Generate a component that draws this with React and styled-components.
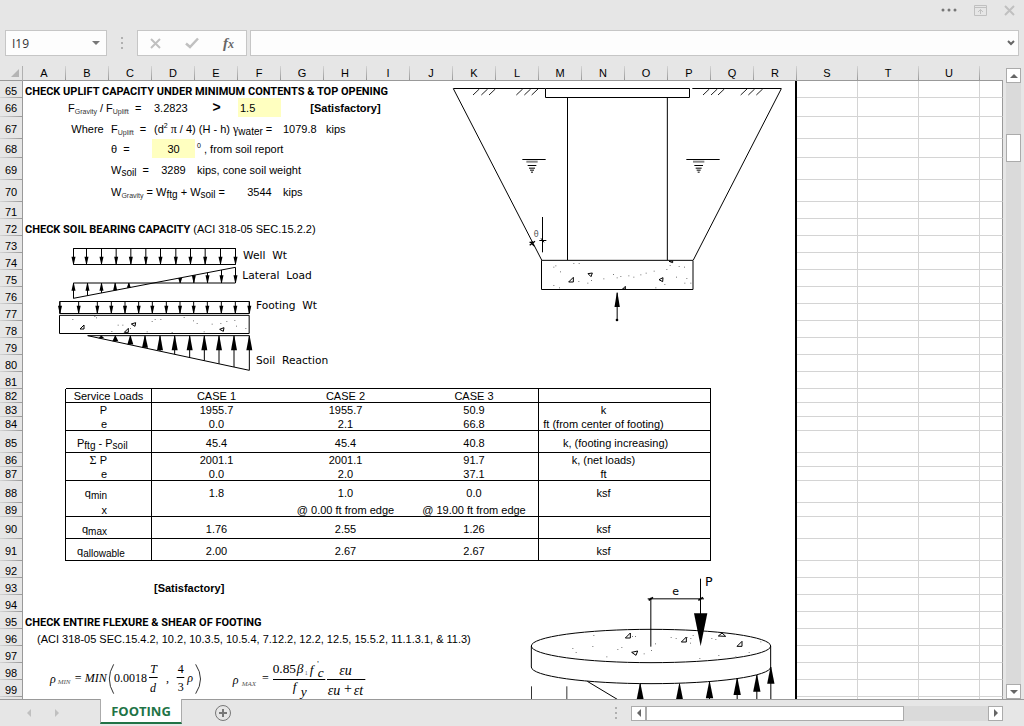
import { Fragment } from "react";
import styled, { createGlobalStyle } from "styled-components";

//#region Sheet data
const COLUMNS = "ABCDEFGHIJKLMNOPQRSTUV".split("");
const col = (letter) => COLUMNS.indexOf(letter);

function FUplift() {
  return (
    <>
      F<SmallSub>Uplift</SmallSub>
    </>
  );
}

// One band of the service loads table, columns B to P
function loads(n, h, label, cases, unit, line, unitIndent) {
  return {
    n,
    h,
    cells: [
      { at: "A", edge: true },
      { at: "B", ...label, line, edge: label.span === 2 },
      ...(label.span === 2 ? [] : [{ at: "C", line, edge: true }]),
      { at: "D", span: 3, text: cases[0], align: "center", line },
      { at: "G", span: 3, text: cases[1], align: "center", line },
      { at: "J", span: 3, text: cases[2], align: "center", line, edge: true },
      { at: "M", span: 3, text: unit, align: "center", indent: unitIndent, line },
      { at: "P", line, edge: true },
    ],
  };
}

const right = (text) => ({ text, align: "right" });

function getRows() {
  return [
    {
      n: 65,
      h: 17,
      cells: [
        {
          at: "A",
          span: 12,
          text: <Heading>CHECK UPLIFT CAPACITY UNDER MINIMUM CONTENTS & TOP OPENING</Heading>,
        },
      ],
    },
    {
      n: 66,
      h: 19,
      cells: [
        {
          at: "B",
          span: 2,
          text: (
            <>
              F<SmallSub>Gravity</SmallSub> / <FUplift />
              &nbsp; =
            </>
          ),
        },
        { at: "D", text: "3.2823" },
        { at: "E", text: <Greater>&gt;</Greater>, align: "center" },
        { at: "F", text: "1.5", fill: true },
        { at: "G", span: 3, text: "[Satisfactory]", align: "center", bold: true },
      ],
    },
    {
      n: 67,
      h: 22,
      cells: [
        { at: "B", text: "Where", align: "center" },
        {
          at: "C",
          text: (
            <>
              <FUplift />
              &nbsp; =
            </>
          ),
        },
        {
          at: "D",
          span: 3,
          text: (
            <>
              (d<Sup>2</Sup> <Greek>π</Greek> / 4) (H - h) <Greek>γ</Greek>
              <Sub>water</Sub> =
            </>
          ),
        },
        { at: "G", text: "1079.8" },
        { at: "H", text: "kips" },
      ],
    },
    {
      n: 68,
      h: 19,
      cells: [
        { at: "C", text: <>θ&nbsp; =</> },
        { at: "D", text: "30", align: "center", fill: true },
        {
          at: "E",
          span: 4,
          text: (
            <>
              <Sup>0</Sup> , from soil report
            </>
          ),
        },
      ],
    },
    {
      n: 69,
      h: 22,
      cells: [
        {
          at: "C",
          text: (
            <>
              W<Sub>soil</Sub>&nbsp; =
            </>
          ),
        },
        { at: "D", text: "3289", align: "center" },
        { at: "E", span: 4, text: "kips, cone soil weight" },
      ],
    },
    {
      n: 70,
      h: 22,
      cells: [
        {
          at: "C",
          span: 3,
          text: (
            <>
              W<SmallSub>Gravity</SmallSub> = W<Sub>ftg</Sub> + W<Sub>soil</Sub> =
            </>
          ),
        },
        { at: "F", text: "3544", align: "center" },
        { at: "G", text: "kips" },
      ],
    },
    { n: 71, h: 17, cells: [] },
    {
      n: 72,
      h: 17,
      cells: [
        {
          at: "A",
          span: 12,
          text: (
            <>
              <Heading>CHECK SOIL BEARING CAPACITY</Heading> (ACI 318-05 SEC.15.2.2)
            </>
          ),
        },
      ],
    },
    ...[73, 74, 75, 76, 77, 78, 79, 80].map((n) => ({ n, h: 17, cells: [] })),
    { n: 81, h: 17, cells: [{ at: "B", span: 15, line: true }] },
    loads(
      82,
      14,
      { text: "Service Loads", align: "center", span: 2 },
      ["CASE 1", "CASE 2", "CASE 3"],
      "",
      true
    ),
    loads(83, 14, right("P"), ["1955.7", "1955.7", "50.9"], "k", false),
    loads(84, 14, right("e"), ["0.0", "2.1", "66.8"], "ft (from center of footing)", true),
    loads(
      85,
      22,
      {
        text: (
          <>
            P<Sub>ftg</Sub> - P<Sub>soil</Sub>
          </>
        ),
        indent: 9,
        span: 2,
      },
      ["45.4", "45.4", "40.8"],
      "k, (footing increasing)",
      true,
      22
    ),
    loads(
      86,
      14,
      right(
        <>
          <Greek>Σ</Greek> P
        </>
      ),
      ["2001.1", "2001.1", "91.7"],
      "k, (net loads)",
      false
    ),
    loads(87, 14, right("e"), ["0.0", "2.0", "37.1"], "ft", true),
    loads(
      88,
      22,
      right(
        <>
          q<Sub>min</Sub>
        </>
      ),
      ["1.8", "1.0", "0.0"],
      "ksf",
      false
    ),
    loads(
      89,
      14,
      right("x"),
      ["", "@ 0.00 ft from edge", "@ 19.00 ft from edge"],
      "",
      true
    ),
    loads(
      90,
      22,
      right(
        <>
          q<Sub>max</Sub>
        </>
      ),
      ["1.76", "2.55", "1.26"],
      "ksf",
      true
    ),
    loads(
      91,
      22,
      {
        text: (
          <>
            q<Sub>allowable</Sub>
          </>
        ),
        indent: 9,
        span: 2,
      },
      ["2.00", "2.67", "2.67"],
      "ksf",
      true
    ),
    { n: 92, h: 17, cells: [] },
    { n: 93, h: 17, cells: [{ at: "D", span: 3, text: "[Satisfactory]", bold: true }] },
    { n: 94, h: 17, cells: [] },
    {
      n: 95,
      h: 17,
      cells: [
        {
          at: "A",
          span: 12,
          text: <Heading>CHECK ENTIRE FLEXURE & SHEAR OF FOOTING</Heading>,
        },
      ],
    },
    {
      n: 96,
      h: 17,
      cells: [
        {
          at: "A",
          span: 12,
          indent: 12,
          text: "(ACI 318-05 SEC.15.4.2, 10.2, 10.3.5, 10.5.4, 7.12.2, 12.2, 12.5, 15.5.2, 11.1.3.1, & 11.3)",
        },
      ],
    },
    { n: 97, h: 17, cells: [] },
    { n: 98, h: 17, cells: [] },
    { n: 99, h: 17, cells: [] },
    // sliver under the last full row
    { n: "", h: 17, cells: [] },
  ];
}
//#endregion

//#region Grid
function Row({ row }) {
  const out = [];
  let next = 0;
  row.cells.forEach((cell) => {
    const start = col(cell.at);
    if (start > next) {
      out.push(<Cell key={"gap" + next} colSpan={start - next} />);
    }
    const span = cell.span || 1;
    out.push(
      <Cell
        key={cell.at}
        colSpan={span}
        $align={cell.align}
        $bold={cell.bold}
        $fill={cell.fill}
        $line={cell.line}
        $edge={cell.edge}
        $indent={cell.indent}
        $tall={row.h > 17}
      >
        {cell.text}
      </Cell>
    );
    next = start + span;
  });

  return (
    <SheetRow $h={row.h}>
      <RowHead scope="row" $tall={row.h > 17}>
        {row.n}
      </RowHead>
      {out}
      <PageEdge colSpan={col("S") - next} />
      <GridCell />
      <GridCell />
      <GridCell />
      <GridCell $last />
    </SheetRow>
  );
}

function Grid() {
  return (
    <Table>
      <colgroup>
        <Col $w={23} />
        {COLUMNS.map((c) => (
          <Col key={c} $w={c < "S" ? 43 : c < "V" ? 61 : null} />
        ))}
      </colgroup>
      <thead>
        <tr>
          <Corner>
            <svg width="8" height="8" viewBox="0 0 8 8">
              <path d="M8 0V8H0Z" fill="#b4b4b4" />
            </svg>
          </Corner>
          {COLUMNS.map((c) => (
            <ColHead key={c} scope="col" $last={c === "V"}>
              {c === "V" ? "" : c}
            </ColHead>
          ))}
        </tr>
      </thead>
      <tbody>
        {getRows().map((row) => (
          <Row key={row.n} row={row} />
        ))}
      </tbody>
    </Table>
  );
}
//#endregion

//#region Drawings
// Vertical arrow, the tip at y2. The head never gets longer than the shaft.
function Arrow({ x, y1, y2, len = 23, half = 6 }) {
  const dir = y2 > y1 ? -1 : 1;
  const head = Math.min(len, Math.abs(y2 - y1));
  const base = y2 + dir * head;
  return (
    <>
      <path d={`M${x} ${y1}V${y2}`} />
      <path
        d={`M${x - 1} ${y2}L${x - half} ${base}H${x + half}L${x + 1} ${y2}Z`}
        fill="#000"
        stroke="none"
      />
    </>
  );
}

function Stones({ at, size = 12 }) {
  return at.map(([x, y]) => (
    <path key={x} d={`M${x} ${y}l${size} ${-size}v${size}z`} />
  ));
}

function Specks({ at }) {
  return at.map(([x, y]) => (
    <rect key={x + "-" + y} x={x} y={y} width="3" height="3" fill="#777" stroke="none" />
  ));
}

function Water({ x, x1, x2 }) {
  return (
    <>
      <path d={`M${x1} 238.5H${x2}`} />
      <path d={`M${x - 17} 245H${x + 17}`} stroke="#888" strokeWidth="6" />
      <path
        d={`M${x - 13} 256.5h26M${x - 9} 264.5h18M${x - 6} 270.5h12M${x - 3} 276.5h6`}
      />
    </>
  );
}

function WellDrawing() {
  const hatches = [118, 143, 166, 248, 272, 294, 808, 832, 853, 921, 944, 968];
  return (
    <Drawing $x={440} $y={14} width="360" height="250" viewBox="0 0 1080 750">
      <path d="M40 25.5H316M757 25.5H1024" />
      <path d="M316.5 25.5H748.5V52.5H316.5Z" />
      <path d="M40 26L305 540M1024 26L760 540" />
      <path d="M382.5 53V540M682 53V540" />
      {hatches.map((x) => (
        <path key={x} d={`M${x} 27l-19 18`} stroke="#222" />
      ))}
      <Water x={276} x1={247} x2={317} />
      <Water x={776} x1={739} x2={839} />
      <path d="M307.5 411V517M298 481.5H319M303 475l9 12" />
      <path d="M269 496L285 484M271 487L280 495L277 486Z" strokeWidth="4" />
      <DrawingText x="281" y="472" $size={24} fill="#555">
        θ
      </DrawingText>
      <path d="M304.5 541H759V628.5H304.5Z" />
      <Stones at={[[386, 606]]} size={14} />
      <path d="M444 581l13 -2l-4 11zM657 599l12 -6l-1 12zM687 544l11 -1v5zM548 627l8 -8v8z" />
      <Specks
        at={[
          [340, 560], [346, 556], [360, 574], [340, 615], [357, 622], [400, 549], [416, 549],
          [415, 603], [442, 608], [453, 600], [490, 595], [519, 582], [530, 592], [541, 588],
          [565, 586], [580, 590], [601, 583], [617, 578], [641, 572], [679, 567], [689, 555],
          [716, 558], [732, 560], [708, 590], [739, 594], [646, 622], [673, 612], [733, 608],
          [751, 608],
        ]}
      />
      <Arrow x={531.5} y1={721} y2={638} len={43} half={8} />
      <circle cx="531" cy="720" r="4" fill="#000" stroke="none" />
    </Drawing>
  );
}

function LoadsDrawing() {
  const well = [220, 259, 304, 348, 392, 437, 481, 527, 571, 615, 661, 706];
  const footing = [180, 236, 292, 334, 375, 416, 457, 499, 540, 581, 622, 664, 706, 748];
  const soil = [304, 346, 391, 435, 480, 524, 569, 613, 657, 702, 748];
  const lateral = (x) => 190 - ((x - 220) * 93) / 486;
  const reaction = (x) => 301 + ((x - 263) * 105) / 485;
  return (
    <Drawing $x={0} $y={169} width="350" height="150" viewBox="0 0 1050 450">
      <path d="M220.5 40.5H706.5V88.5H220.5Z" />
      {well.map((x) => (
        <Arrow key={x} x={x + 0.5} y1={40} y2={88} />
      ))}
      <path d="M220 144H706" />
      <path d="M220 190L706 97" />
      {[220, 262, 304, 345, 386].map((x) => (
        <Arrow key={x} x={x + 0.5} y1={lateral(x)} y2={144} />
      ))}
      {[540, 581, 622, 664, 706].map((x) => (
        <Arrow key={x} x={x + 0.5} y1={lateral(x)} y2={144} />
      ))}
      <path d="M179 199.5H748V235.5H179Z" />
      {footing.map((x) => (
        <Arrow key={x} x={x} y1={199} y2={235} />
      ))}
      <path d="M178.5 241H747.5V295.5H178.5Z" />
      <Stones at={[[240, 282], [373, 292]]} />
      <path d="M394 267l13 -4l-2 11zM659 283l13 -5l-2 11z" />
      <Specks
        at={[
          [217, 252], [283, 243], [288, 247], [353, 269], [367, 269], [334, 288], [390, 279],
          [455, 258], [464, 252], [481, 252], [551, 246], [579, 256], [590, 264], [635, 266],
          [661, 264], [679, 258], [703, 255], [515, 291], [440, 289], [611, 289], [708, 272],
          [736, 279],
        ]}
      />
      <path d="M263 302H748" />
      <path d="M263 302L748 406" />
      {soil.map((x) => (
        <Arrow key={x} x={x} y1={reaction(x)} y2={302} len={44} half={9} />
      ))}
      <DrawingText x="729" y="73">
        Well&nbsp; Wt
      </DrawingText>
      <DrawingText x="727" y="133">
        Lateral&nbsp; Load
      </DrawingText>
      <DrawingText x="768" y="222">
        Footing&nbsp; Wt
      </DrawingText>
      <DrawingText x="768" y="386">
        Soil&nbsp; Reaction
      </DrawingText>
    </Drawing>
  );
}

function PlateDrawing() {
  const arrows = [
    [390, 356],
    [508, 356],
    [598, 350],
    [681, 340],
    [740, 330],
    [782, 306],
  ];
  return (
    <Drawing $x={510} $y={499} width="300" height="150" viewBox="0 0 900 450">
      <ellipse cx="423" cy="243" rx="359" ry="50" />
      <path d="M64 243V306A359 50 0 0 0 782 306V243" />
      <path d="M422.5 98V245M413 101.5H582M571.5 41V150" />
      <path d="M416 106L429 97M565 106L579 97" strokeWidth="5" />
      <path d="M552 145H592L572 243Z" fill="#000" stroke="none" />
      <Stones at={[[346, 219], [514, 231], [681, 244]]} size={15} />
      <path d="M365 262l18 -4l-5 13zM625 213l11 -9l11 10z" />
      <Specks
        at={[
          [187, 249], [197, 261], [247, 243], [250, 210], [289, 274], [322, 252], [334, 246],
          [366, 213], [375, 213], [401, 265], [423, 255], [435, 235], [482, 216], [497, 219],
          [530, 216], [541, 219], [548, 210], [540, 233], [568, 279], [604, 219], [616, 222],
          [625, 270], [676, 274], [716, 261], [751, 229],
        ]}
      />
      <path d="M64.5 364V450M170.5 364V450" stroke="#333" />
      <path d="M232 349L400 450" />
      {arrows.map(([x, y]) => (
        <Arrow key={x} x={x + 0.5} y1={450} y2={y} len={50} half={11} />
      ))}
      <DrawingText x="487" y="90" $size={33}>
        e
      </DrawingText>
      <DrawingText x="585" y="64" $size={38}>
        P
      </DrawingText>
    </Drawing>
  );
}

function Equations() {
  return (
    <Drawing $x={45} $y={594} width="325" height="39" viewBox="135 300 975 117">
      <MathText x="150" y="368">ρ</MathText>
      <MathText x="173" y="373" $size={21} fill="#555">MIN</MathText>
      <MathText x="224" y="367" $upright>=</MathText>
      <MathText x="254" y="367">MIN</MathText>
      <path d="M341 313Q315 357 341 401" stroke="#333" />
      <MathText x="342" y="367" $upright>0.0018</MathText>
      <MathText x="451" y="339">T</MathText>
      <path d="M447 352.5H473M530 352.5H553" />
      <MathText x="450" y="395">d</MathText>
      <MathText x="498" y="367" $upright>,</MathText>
      <MathText x="533" y="339" $upright>4</MathText>
      <MathText x="533" y="393" $upright>3</MathText>
      <MathText x="562" y="367">ρ</MathText>
      <path d="M587 313Q616 357 587 401" stroke="#333" />
      <MathText x="698" y="372">ρ</MathText>
      <MathText x="725" y="378" $size={21} fill="#555">MAX</MathText>
      <MathText x="786" y="366" $upright>=</MathText>
      <MathText x="818" y="338" $size={40} $upright>0.85</MathText>
      <MathText x="890" y="338" $size={40}>β</MathText>
      <MathText x="914" y="345" $size={18} $upright fill="#666">1</MathText>
      <MathText x="929" y="342" $size={40}>f</MathText>
      <MathText x="952" y="322" $size={24} $upright>'</MathText>
      <MathText x="953" y="351" $size={40}>c</MathText>
      <path d="M819 358.5H976M981 358.5H1096" />
      <MathText x="878" y="394" $size={40}>f</MathText>
      <MathText x="902" y="408" $size={40}>y</MathText>
      <MathText x="1018" y="346" $size={42}>εu</MathText>
      <MathText x="983" y="405" $size={42}>εu</MathText>
      <MathText x="1032" y="399" $size={42} $upright>+</MathText>
      <MathText x="1061" y="405" $size={42}>εt</MathText>
    </Drawing>
  );
}
//#endregion

//#region Window parts
function Triangle({ dir, color = "#666" }) {
  const paths = {
    up: "M0 6L4 2L8 6Z",
    down: "M0 2L4 6L8 2Z",
    left: "M6 0L2 4L6 8Z",
    right: "M2 0L6 4L2 8Z",
  };
  return (
    <svg width="8" height="8" viewBox="0 0 8 8">
      <path d={paths[dir]} fill={color} />
    </svg>
  );
}

function Grip() {
  return (
    <GripBox>
      <i />
      <i />
      <i />
    </GripBox>
  );
}

function TitleBar() {
  return (
    <TitleRow>
      <IconButton aria-label="More">
        <svg width="16" height="12" viewBox="0 0 16 12" fill="#777">
          <circle cx="2" cy="6" r="1.5" />
          <circle cx="8" cy="6" r="1.5" />
          <circle cx="14" cy="6" r="1.5" />
        </svg>
      </IconButton>
      <IconButton aria-label="Ribbon display options">
        <svg width="13" height="11" viewBox="0 0 13 11" fill="none" stroke="#c0c0c0">
          <path d="M0.5 0.5H12.5V10.5H0.5ZM0.5 2.5H12.5M6.5 9V4.5M4 7L6.5 4.5L9 7" />
        </svg>
      </IconButton>
      <IconButton aria-label="Close">
        <svg width="11" height="11" viewBox="0 0 11 11" stroke="#c0c0c0" strokeWidth="2">
          <path d="M1 1L10 10M10 1L1 10" />
        </svg>
      </IconButton>
    </TitleRow>
  );
}

function FormulaBar() {
  return (
    <FormulaRow>
      <NameBox>
        <BarInput aria-label="Name box" defaultValue="I19" />
        <IconButton aria-label="Names">
          <Triangle dir="down" color="#777" />
        </IconButton>
      </NameBox>
      <Grip />
      <EntryButtons>
        <IconButton aria-label="Cancel">
          <svg width="11" height="11" viewBox="0 0 11 11" stroke="#c0c0c0" strokeWidth="2">
            <path d="M1 1L10 10M10 1L1 10" />
          </svg>
        </IconButton>
        <IconButton aria-label="Enter">
          <svg width="14" height="12" viewBox="0 0 14 12" fill="none">
            <path d="M1 6.5L5 10L13 1.5" stroke="#c0c0c0" strokeWidth="2.5" />
          </svg>
        </IconButton>
        <FxButton aria-label="Insert function">
          f<small>x</small>
        </FxButton>
      </EntryButtons>
      <FormulaBox>
        <BarInput aria-label="Formula" />
        <IconButton aria-label="Expand formula bar">
          <svg width="8" height="6" viewBox="0 0 8 6" fill="none" stroke="#666" strokeWidth="2">
            <path d="M1 1L4 4L7 1" />
          </svg>
        </IconButton>
      </FormulaBox>
    </FormulaRow>
  );
}

function Footer() {
  return (
    <FooterRow>
      <TabNav>
        <IconButton aria-label="Previous sheet">
          <Triangle dir="left" color="#c0c0c0" />
        </IconButton>
        <IconButton aria-label="Next sheet">
          <Triangle dir="right" color="#c0c0c0" />
        </IconButton>
      </TabNav>
      <SheetTab>FOOTING</SheetTab>
      <AddButton aria-label="New sheet">
        <svg width="16" height="16" viewBox="0 0 16 16" fill="none" stroke="#777">
          <circle cx="8" cy="8" r="7.5" />
          <path d="M8 4V12M4 8H12" strokeWidth="2" />
        </svg>
      </AddButton>
      <Grip />
      <HScroll>
        <ScrollButton aria-label="Scroll left">
          <Triangle dir="left" />
        </ScrollButton>
        <HThumb />
        <ScrollButton aria-label="Scroll right">
          <Triangle dir="right" />
        </ScrollButton>
      </HScroll>
    </FooterRow>
  );
}

export default function App() {
  return (
    <Fragment>
      <GlobalStyle />
      <Window>
        <TitleBar />
        <FormulaBar />
        <Workspace>
          <Sheet>
            <Grid />
            <WellDrawing />
            <LoadsDrawing />
            <PlateDrawing />
            <Equations />
          </Sheet>
          <VScroll>
            <ScrollButton aria-label="Scroll up">
              <Triangle dir="up" />
            </ScrollButton>
            <VTrack>
              <VThumb />
            </VTrack>
            <ScrollButton aria-label="Scroll down">
              <Triangle dir="down" />
            </ScrollButton>
          </VScroll>
        </Workspace>
        <Footer />
      </Window>
    </Fragment>
  );
}
//#endregion

//#region Styles
const GlobalStyle = createGlobalStyle`
  * {
    box-sizing: border-box;
  }

  body {
    margin: 0;
    background: #e6e6e6;
    font-family: "Liberation Sans", Arial, sans-serif;
    font-size: 11px;
    color: #000;
  }

  button, input {
    font: inherit;
    color: inherit;
    padding: 0;
    border: 0;
    background: none;
  }
`;

const Window = styled.div`
  display: flex;
  flex-direction: column;
  height: 100vh;
  overflow: hidden;
`;

const IconButton = styled.button`
  display: flex;
  align-items: center;
  justify-content: center;
`;

const TitleRow = styled.header`
  display: flex;
  justify-content: flex-end;
  align-items: center;
  gap: 17px;
  height: 30px;
  padding: 0 9px 10px 0;
`;

const FormulaRow = styled.div`
  display: flex;
  align-items: center;
  height: 26px;
  padding: 0 5px;
  margin-bottom: 10px;
`;

const BarBox = styled.div`
  display: flex;
  align-items: center;
  height: 26px;
  border: 1px solid #c6c6c6;
  background: #fdfdfd;
`;

const NameBox = styled(BarBox)`
  width: 102px;
  padding: 0 6px;
`;

const EntryButtons = styled(BarBox)`
  width: 110px;
  justify-content: space-between;
  padding: 0 12px;
  margin-right: 3px;
`;

const FormulaBox = styled(BarBox)`
  flex: 1;
  padding: 0 3px 0 6px;
`;

const BarInput = styled.input`
  flex: 1;
  min-width: 0;
  font-family: "Open Sans", "Noto Sans", sans-serif;
  font-size: 12px;
  color: #333;
  outline: none;
`;

const FxButton = styled.button`
  font: italic bold 15px "Liberation Serif", serif;
  line-height: 20px;
  color: #666;

  small {
    font-size: 12px;
  }
`;

const GripBox = styled.div`
  display: flex;
  flex-direction: column;
  align-items: center;
  gap: 3px;
  width: 30px;

  i {
    width: 2px;
    height: 2px;
    background: #b0b0b0;
  }
`;

const Workspace = styled.main`
  display: flex;
  flex: 1;
  min-height: 0;
  padding-right: 3px;
`;

const Sheet = styled.div`
  position: relative;
  flex: 1;
  min-width: 0;
  overflow: hidden;
`;

const Table = styled.table`
  width: 100%;
  table-layout: fixed;
  border-collapse: separate;
  border-spacing: 0;
  line-height: 12px;
`;

const Col = styled.col`
  width: ${(p) => (p.$w ? p.$w + "px" : "auto")};
`;

const Corner = styled.th`
  height: 15px;
  padding: 0 3px 0 0;
  text-align: right;
  line-height: 8px;
  border-right: 1px solid #b0b0b0;
  border-bottom: 1px solid #999;
`;

const ColHead = styled.th`
  height: 15px;
  padding: 0 1px 0 0;
  font-weight: normal;
  vertical-align: middle;
  border-bottom: 1px solid #999;
  background: ${(p) =>
    p.$last
      ? "none"
      : "linear-gradient(#d4d4d4, #999) right / 1px 100% no-repeat"};
`;

const SheetRow = styled.tr`
  height: ${(p) => p.$h}px;
  background: #fff;
`;

const RowHead = styled.th`
  padding: ${(p) => (p.$tall ? 2 : 0)}px 0 1px;
  font-weight: normal;
  vertical-align: ${(p) => (p.$tall ? "middle" : "bottom")};
  border-right: 1px solid #999;
  background: linear-gradient(90deg, #d4d4d4, #999) bottom / 100% 1px no-repeat #e6e6e6;
`;

const Cell = styled.td`
  padding: ${(p) => (p.$tall ? 2 : 0)}px 2px ${(p) => (p.$line ? 0 : 1)}px
    ${(p) => 2 + (p.$indent || 0)}px;
  white-space: nowrap;
  vertical-align: ${(p) => (p.$tall ? "middle" : "bottom")};
  text-align: ${(p) => p.$align || "left"};
  font-weight: ${(p) => (p.$bold ? "bold" : "normal")};
  background: ${(p) => (p.$fill ? "#ffffc0" : "none")};
  border-bottom: ${(p) => (p.$line ? "1px solid #000" : "0")};
  border-right: ${(p) => (p.$edge ? "1px solid #000" : "0")};
`;

const PageEdge = styled.td`
  padding: 0;
  border-right: 2px solid #000;
`;

const GridCell = styled.td`
  padding: 0;
  border-bottom: 1px solid #d4d4d4;
  border-right: 1px solid ${(p) => (p.$last ? "#999" : "#d4d4d4")};
`;

const Heading = styled.b`
  font-family: Roboto, "Liberation Sans", sans-serif;
  line-height: 0;
`;

const Sub = styled.sub`
  font-size: 10px;
  line-height: 0;
  vertical-align: -2px;
`;

const SmallSub = styled(Sub)`
  font-size: 7px;
  color: #333;
`;

const Sup = styled.sup`
  font-size: 7px;
  line-height: 0;
`;

const Greek = styled.span`
  font-family: "Liberation Serif", serif;
  font-size: 12px;
  line-height: 0;
`;

const Greater = styled.b`
  font-size: 14px;
  line-height: 0;
`;

const Drawing = styled.svg`
  position: absolute;
  left: ${(p) => p.$x}px;
  top: ${(p) => p.$y}px;
  fill: none;
  stroke: #000;
  stroke-width: 3;
`;

const DrawingText = styled.text`
  font-family: "DejaVu Sans", sans-serif;
  font-size: ${(p) => p.$size || 32}px;
  fill: ${(p) => p.fill || "#000"};
  stroke: none;
`;

const MathText = styled.text`
  font-family: "Liberation Serif", serif;
  font-size: ${(p) => p.$size || 36}px;
  font-style: ${(p) => (p.$upright ? "normal" : "italic")};
  fill: ${(p) => p.fill || "#000"};
  stroke: none;
`;

const ScrollButton = styled.button`
  display: flex;
  align-items: center;
  justify-content: center;
  flex: none;
  width: 15px;
  height: 15px;
  border: 1px solid #ababab;
  background: #fff;
`;

const VScroll = styled.div`
  display: flex;
  flex-direction: column;
  width: 15px;
  margin: 2px 0 0 3px;
`;

const VTrack = styled.div`
  flex: 1;
  padding-top: 51px;
  background: #dadada;
`;

const VThumb = styled.div`
  height: 28px;
  border: 1px solid #ababab;
  background: #fff;
`;

const FooterRow = styled.footer`
  display: flex;
  align-items: center;
  height: 27px;
  padding-right: 21px;
  border-top: 1px solid #999;
`;

const TabNav = styled.nav`
  display: flex;
  gap: 20px;
  width: 100px;
  padding-left: 25px;
`;

const SheetTab = styled.button`
  align-self: flex-start;
  width: 82px;
  height: 25px;
  margin-top: -1px;
  border: 1px solid #ababab;
  border-top: 0;
  border-bottom: 2px solid #217346;
  background: #fff;
  color: #217346;
  font: bold 13px "Open Sans", "Noto Sans", sans-serif;
`;

const AddButton = styled(IconButton)`
  margin: 0 auto 0 33px;
`;

const HScroll = styled.div`
  display: flex;
  width: 372px;
  background: #dadada;

  ${ScrollButton}:last-child {
    margin-left: auto;
  }
`;

const HThumb = styled.div`
  width: 258px;
  border: 1px solid #ababab;
  background: #fff;
`;
//#endregion
